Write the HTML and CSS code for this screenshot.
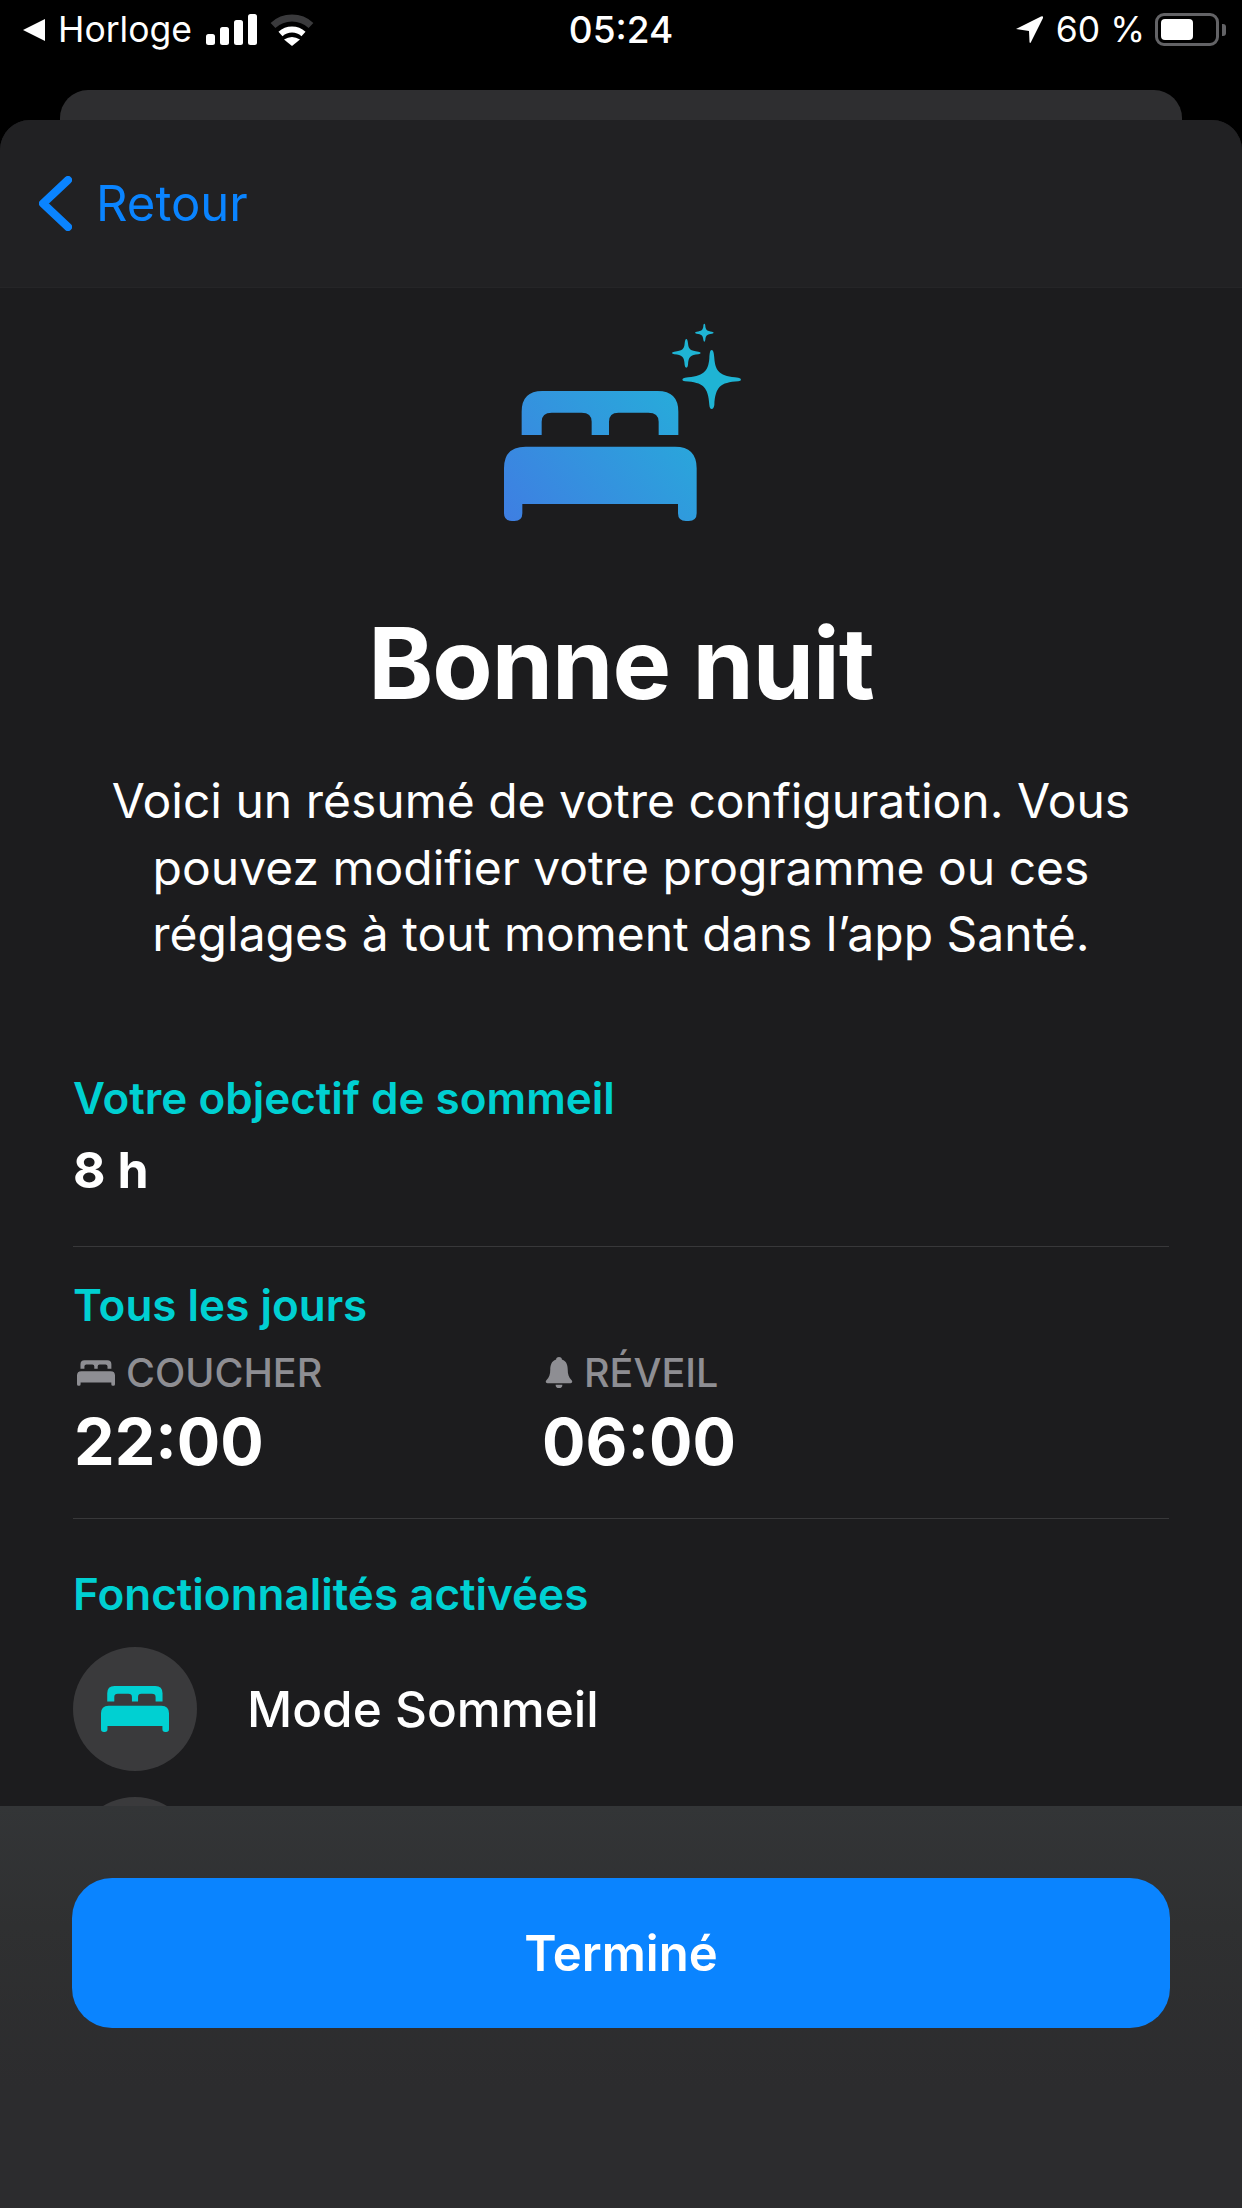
FILE: index.html
```html
<!DOCTYPE html>
<html lang="fr">
<head>
<meta charset="utf-8">
<title>Bonne nuit</title>
<link rel="stylesheet" href="styles.css">
</head>
<body>
<div class="screen">
  <div class="status">
    <div class="status-left">
      <svg class="ic-back" viewBox="0 0 22 22"><path d="M0 11 L22 0 V22 Z"/></svg>
      <span class="status-app">Horloge</span>
      <svg class="ic-signal" viewBox="206 14 51 31"><rect x="206" y="34" width="9" height="11" rx="2.5"/><rect x="220" y="27" width="9" height="18" rx="2.5"/><rect x="234" y="20" width="9" height="25" rx="2.5"/><rect x="248" y="14" width="9" height="31" rx="2.5"/></svg>
      <svg class="ic-wifi" viewBox="269 13 46 32"><path class="wifi-dim" d="M273 24.5 A28 28 0 0 1 311 24.5"/><path class="wifi-on" d="M280.5 33 A17 17 0 0 1 303.5 33"/><path class="wifi-dot" d="M292 45 L284 38.5 Q292 33.5 300 38.5 Z"/></svg>
    </div>
    <div class="status-time">05:24</div>
    <div class="status-right">
      <svg class="ic-loc" viewBox="0 0 27 27"><path d="M0 13 L25 0.5 Q27.5 -0.5 27 2 L15 26 Q14 28 13.5 26 L13 15 Z"/></svg>
      <span class="status-pct">60 %</span>
      <div class="battery"><div class="battery-fill"></div></div>
      <div class="battery-cap"></div>
    </div>
  </div>
  <div class="peek"></div>
  <div class="sheet">
    <div class="nav">
      <svg class="ic-chevron" viewBox="0 0 33 55"><path d="M29 4 L4 27.5 L29 51"/></svg>
      <span class="nav-back">Retour</span>
    </div>
    <div class="content">
      <div class="hero">
        <svg class="hero-art" viewBox="0 0 900 720">
          <defs><linearGradient id="bedGrad" gradientUnits="userSpaceOnUse" x1="170" y1="680" x2="640" y2="260"><stop offset="0" stop-color="#3e7fe2"/><stop offset="1" stop-color="#27abda"/></linearGradient></defs>
          <path fill="url(#bedGrad)" d="M185 405 V335 Q185 273 247 273 H593 Q655 273 655 335 V405 H596 V365 Q596 338 565 338 H475 Q447 338 447 365 V405 H395 V365 Q395 338 365 338 H275 Q245 338 245 365 V405 Z M132 640 V505 Q132 440 197 440 H645 Q710 440 710 505 V640 Q710 663 686 663 H678 Q654 663 654 640 V612 H187 V640 Q187 663 163 663 H156 Q132 663 132 640 Z"/>
          <path class="spark" d="M755 150 C760 150 762 160 763 175 C766 215 780 230 835 233 Q843 235 843 239 Q843 243 835 244 C780 247 766 262 763 315 Q761 327 755 327 Q749 327 748 315 C745 262 730 247 675 244 Q667 243 667 239 Q667 235 675 233 C730 230 745 215 748 175 C749 160 750 150 755 150Z"/>
          <path class="spark" d="M679 117 C682 117 683 122 684 130 C685 148 692 153 715 155 Q722 156 722 159 Q722 162 715 163 C692 165 685 170 684 195 Q683 203 679 203 Q675 203 674 195 C673 170 666 165 643 163 Q636 162 636 159 Q636 156 643 155 C666 153 673 148 674 130 C675 122 676 117 679 117Z"/>
          <path class="spark" d="M733 71 C735 71 736 74 736 79 C737 90 742 94 756 95 Q761 96 761 98 Q761 100 756 101 C742 102 737 106 736 119 Q735 125 733 125 Q731 125 730 119 C729 106 724 102 710 101 Q705 100 705 98 Q705 96 710 95 C724 94 729 90 730 79 C730 74 731 71 733 71Z"/>
        </svg>
      </div>
      <h1 class="title">Bonne nuit</h1>
      <p class="intro">Voici un résumé de votre configuration. Vous<br>pouvez modifier votre programme ou ces<br>réglages à tout moment dans l’app Santé.</p>

      <section class="block block-goal">
        <h2 class="label">Votre objectif de sommeil</h2>
        <div class="goal">8 h</div>
      </section>

      <section class="block block-sched">
        <h2 class="label">Tous les jours</h2>
        <div class="sched">
          <div class="sched-col">
            <div class="sched-head">
              <svg class="ic-bed-small" viewBox="132 273 578 390"><path d="M185 405 V335 Q185 273 247 273 H593 Q655 273 655 335 V405 H596 V365 Q596 338 565 338 H475 Q447 338 447 365 V405 H395 V365 Q395 338 365 338 H275 Q245 338 245 365 V405 Z M132 640 V505 Q132 440 197 440 H645 Q710 440 710 505 V640 Q710 663 686 663 H678 Q654 663 654 640 V612 H187 V640 Q187 663 163 663 H156 Q132 663 132 640 Z"/></svg>
              <span>COUCHER</span>
            </div>
            <div class="sched-time">22:00</div>
          </div>
          <div class="sched-col">
            <div class="sched-head">
              <svg class="ic-bell" viewBox="0 0 28 33"><path d="M14 0 C12 0 11 1 11 2.5 C6 4 5 9 5 13 C5 18 4 21 1 24 C0 25 0 27 2 27 H26 C28 27 28 25 27 24 C24 21 23 18 23 13 C23 9 22 4 17 2.5 C17 1 16 0 14 0Z M10.5 28.5 H17.5 A3.5 3.5 0 0 1 10.5 28.5Z"/></svg>
              <span>RÉVEIL</span>
            </div>
            <div class="sched-time">06:00</div>
          </div>
        </div>
      </section>

      <section class="block-features">
        <h2 class="label">Fonctionnalités activées</h2>
        <div class="feature">
          <div class="feature-disc">
            <svg class="ic-bed-teal" viewBox="132 273 578 390"><path d="M185 405 V335 Q185 273 247 273 H593 Q655 273 655 335 V405 H596 V365 Q596 338 565 338 H475 Q447 338 447 365 V405 H395 V365 Q395 338 365 338 H275 Q245 338 245 365 V405 Z M132 640 V505 Q132 440 197 440 H645 Q710 440 710 505 V640 Q710 663 686 663 H678 Q654 663 654 640 V612 H187 V640 Q187 663 163 663 H156 Q132 663 132 640 Z"/></svg>
          </div>
          <span class="feature-name">Mode Sommeil</span>
        </div>
        <div class="feature">
          <div class="feature-disc"></div>
        </div>
      </section>
    </div>
    <div class="footer">
      <button class="done">Terminé</button>
    </div>
  </div>
</div>
</body>
</html>
```
FILE: styles.css
```css
* { box-sizing: border-box; margin: 0; padding: 0; }
html, body { background: #000; }
body { width: 1242px; height: 2208px; overflow: hidden; font-family: Inter, "Noto Sans", sans-serif; color: #fff; }
.screen { width: 1242px; height: 2208px; display: flex; flex-direction: column; overflow: hidden; }

.status { height: 90px; flex: none; display: grid; grid-template-columns: 1fr auto 1fr; align-items: start; padding: 13px 16px 0; font-size: 35.5px; line-height: 36px; }
.status-left { display: flex; align-items: center; height: 33px; padding-left: 7px; }
.status-app { margin-left: 13px; }
.ic-back { width: 22px; height: 22px; fill: #fff; }
.ic-signal { width: 51px; height: 31px; fill: #fff; margin-left: 14px; }
.ic-wifi { width: 46px; height: 32px; margin-left: 12px; }
.wifi-dim { fill: none; stroke: #3a3a3c; stroke-width: 7; }
.wifi-on { fill: none; stroke: #fff; stroke-width: 6; }
.wifi-dot { fill: #fff; }
.status-time { font-weight: 500; height: 33px; line-height: 33px; font-size: 37px; }
.status-right { display: flex; align-items: center; justify-content: flex-end; height: 33px; }
.status-pct { margin-left: 13px; }
.ic-loc { width: 27px; height: 27px; fill: #fff; }
.battery { width: 64px; height: 33px; margin-left: 10px; border: 3px solid #636366; border-radius: 9px; padding: 3px; }
.battery-fill { width: 32px; height: 100%; background: #fff; border-radius: 4px; }
.battery-cap { width: 4px; height: 12px; margin-left: 3px; background: #636366; border-radius: 0 3px 3px 0; }

.peek { height: 30px; flex: none; margin: 0 60px; background: #2e2e30; border-radius: 28px 28px 0 0; }

.sheet { position: relative; flex: 1; overflow: hidden; border-radius: 30px 30px 0 0; background: #1c1c1e; display: flex; flex-direction: column; }
.nav { height: 168px; flex: none; display: flex; align-items: center; padding-left: 39px; background: #212123; border-bottom: 1px solid #252527; }
.ic-chevron { width: 33px; height: 55px; fill: none; stroke: #0a84ff; stroke-width: 8; stroke-linecap: round; stroke-linejoin: round; }
.nav-back { margin-left: 24px; color: #0a84ff; font-size: 49px; line-height: 60px; }

.content { flex: 1; padding: 12px 73px 0; overflow: hidden; }
.hero { display: flex; justify-content: center; padding-right: 22px; height: 240px; }
.hero-art { width: 300px; height: 240px; flex: none; }
.spark { fill: #1fb4d4; }
.title { margin-top: 64px; text-align: center; font-size: 98.5px; line-height: 120px; font-weight: 700; letter-spacing: -1px; }
.intro { margin-top: 44px; text-align: center; font-size: 48px; line-height: 66.5px; font-weight: 400; }

.block { border-bottom: 1px solid #38383a; }
.block-goal { margin-top: 100px; padding-bottom: 44px; }
.block-sched { padding-top: 28px; padding-bottom: 38px; }
.block-features { padding-top: 45px; }
.label { font-size: 44px; line-height: 60px; font-weight: 600; color: #00d0d2; }
.goal { margin-top: 10px; font-size: 50px; line-height: 64px; font-weight: 700; }

.sched { display: grid; grid-template-columns: 468px 1fr; margin-top: 16px; }
.sched-head { display: flex; align-items: center; height: 44px; font-size: 39.5px; font-weight: 500; color: #8e8e93; padding-left: 4px; }
.sched-time { margin-top: 9px; font-size: 64.5px; line-height: 76px; font-weight: 700; padding-left: 1px; }
.ic-bed-small { width: 38px; height: 26px; fill: #8e8e93; margin-right: 11px; }
.ic-bell { width: 28px; height: 32px; fill: #8e8e93; margin-right: 11px; }

.feature { display: flex; align-items: center; margin-top: 23px; height: 124px; }
.feature + .feature { margin-top: 26px; }
.feature-disc { width: 124px; height: 124px; border-radius: 50%; background: #3a3a3c; display: flex; align-items: center; justify-content: center; flex: none; }
.ic-bed-teal { width: 68px; height: 46px; fill: #00d0d2; }
.feature-name { margin-left: 50px; font-size: 49.5px; font-weight: 500; line-height: 60px; }

.footer { position: absolute; left: 0; right: 0; bottom: 0; height: 402px; padding: 72px 72px 0; background: linear-gradient(180deg, #333537 0%, #2f3031 30%, #2c2c2e 70%); }
.done { display: block; width: 1098px; height: 150px; border: none; border-radius: 40px; background: #0a84ff; color: #fff; font-family: Inter, "Noto Sans", sans-serif; font-size: 49px; font-weight: 600; }
```
